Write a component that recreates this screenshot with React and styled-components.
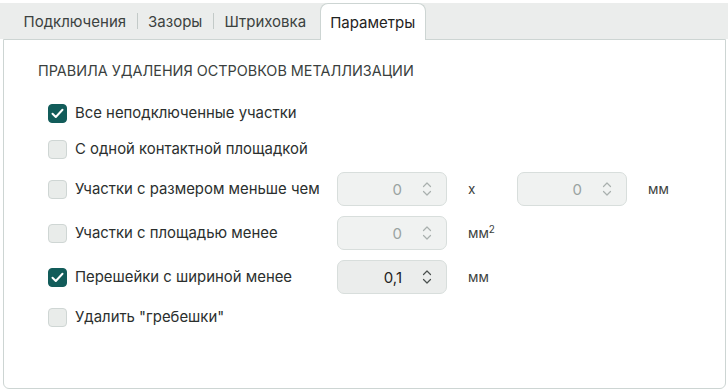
import styled, { createGlobalStyle } from 'styled-components';

const GlobalStyle = createGlobalStyle`
    body {
        margin: 0;
        background: #ffffff;
        font-family: Inter, "Noto Sans", sans-serif;
        color: #2b2f2e;
    }
`;

const tabs = ['Подключения', 'Зазоры', 'Штриховка', 'Параметры'];

function Check({ checked }) {
    return (
        <CheckBox $checked={checked}>
            {checked && (
                <svg width="13" height="11" viewBox="0 0 13 11">
                    <path d="M1.5 5.8 L4.8 9 L11.5 1.8" fill="none" stroke="#ffffff" strokeWidth="2" strokeLinecap="round" strokeLinejoin="round" />
                </svg>
            )}
        </CheckBox>
    );
}

function NumberInput({ value, active }) {
    return (
        <InputBox $active={active}>
            <InputValue $active={active}>{value}</InputValue>
            <svg width="10" height="18" viewBox="0 0 10 18">
                <path d="M1.5 6.5 L5 3 L8.5 6.5 M1.5 11.5 L5 15 L8.5 11.5" fill="none" stroke={active ? '#4a504e' : '#a9b0ae'} strokeWidth="1.2" strokeLinecap="round" strokeLinejoin="round" />
            </svg>
        </InputBox>
    );
}

function App() {
    return (
        <>
            <GlobalStyle />
            <Page>
                <TabBar>
                    {tabs.map((t, i) => (
                        <TabGroup key={t}>
                            {i > 0 && i < 3 && <TabSep />}
                            <Tab $active={t === 'Параметры'}>{t}</Tab>
                        </TabGroup>
                    ))}
                </TabBar>
                <Panel>
                    <Heading>ПРАВИЛА УДАЛЕНИЯ ОСТРОВКОВ МЕТАЛЛИЗАЦИИ</Heading>
                    <Rows>
                        <Row>
                            <Label><Check checked />Все неподключенные участки</Label>
                        </Row>
                        <Row>
                            <Label><Check />С одной контактной площадкой</Label>
                        </Row>
                        <Row>
                            <Label><Check />Участки с размером меньше чем</Label>
                            <NumberInput value="0" />
                            <Unit>x</Unit>
                            <NumberInput value="0" />
                            <Unit>мм</Unit>
                        </Row>
                        <Row>
                            <Label><Check />Участки с площадью менее</Label>
                            <NumberInput value="0" />
                            <Unit>мм<sup>2</sup></Unit>
                        </Row>
                        <Row>
                            <Label><Check checked />Перешейки с шириной менее</Label>
                            <NumberInput value="0,1" active />
                            <Unit>мм</Unit>
                        </Row>
                        <Row>
                            <Label><Check />Удалить "гребешки"</Label>
                        </Row>
                    </Rows>
                </Panel>
            </Page>
        </>
    );
}

export default App;

const Page = styled.div`
    padding-top: 3px;
    width: 728px;
`;

const TabBar = styled.div`
    display: flex;
    align-items: flex-end;
    height: 36px;
    padding-left: 13px;
    background: #ebedec;
`;

const TabGroup = styled.div`
    display: flex;
    align-items: center;
    height: 100%;
`;

const TabSep = styled.div`
    width: 1px;
    height: 16px;
    background: #c3cac8;
`;

const Tab = styled.div`
    display: flex;
    align-items: center;
    box-sizing: border-box;
    height: ${(p) => (p.$active ? '37px' : '36px')};
    margin-left: ${(p) => (p.$active ? '3px' : '0')};
    margin-bottom: ${(p) => (p.$active ? '-1px' : '0')};
    padding: 0 ${(p) => (p.$active ? '9.5px' : '10.5px')};
    font-size: 15px;
    color: ${(p) => (p.$active ? '#1f2322' : '#3c4240')};
    background: ${(p) => (p.$active ? '#ffffff' : 'transparent')};
    border: ${(p) => (p.$active ? '1px solid #cdd5d3' : 'none')};
    border-bottom: none;
    border-radius: 8px 8px 0 0;
    position: relative;
    z-index: 1;
`;

const Panel = styled.div`
    box-sizing: border-box;
    margin: 0 2px 0 3px;
    height: 350px;
    padding: 22px 20px 0 34px;
    border: 1px solid #cdd5d3;
    border-radius: 0 0 6px 6px;
`;

const Heading = styled.div`
    font-size: 14.4px;
    line-height: 18px;
    color: #3a3f3e;
    margin-bottom: 20px;
`;

const Rows = styled.div`
    display: flex;
    flex-direction: column;
    gap: 10px;
    padding-left: 10px;
`;

const Row = styled.div`
    display: flex;
    align-items: center;
    min-height: 26px;
`;

const Label = styled.div`
    display: flex;
    align-items: center;
    flex-shrink: 0;
    gap: 8px;
    width: 289px;
    font-size: 14.9px;
    color: #2b2f2e;
`;

const CheckBox = styled.div`
    display: flex;
    align-items: center;
    justify-content: center;
    flex-shrink: 0;
    box-sizing: border-box;
    width: 19px;
    height: 19px;
    border-radius: 4px;
    background: ${(p) => (p.$checked ? '#125c5a' : '#e9ecea')};
    border: 1px solid ${(p) => (p.$checked ? '#125c5a' : '#cfd6d4')};
`;

const InputBox = styled.div`
    display: flex;
    align-items: center;
    justify-content: flex-end;
    flex-shrink: 0;
    gap: 20px;
    box-sizing: border-box;
    width: 110px;
    height: 34px;
    padding-right: 14px;
    background: ${(p) => (p.$active ? '#ebedec' : '#f0f2f1')};
    border: 1px solid #d8dedc;
    border-radius: 7px;
`;

const InputValue = styled.span`
    font-size: 15px;
    color: ${(p) => (p.$active ? '#1f2322' : '#9aa3a1')};
`;

const Unit = styled.div`
    flex-shrink: 0;
    width: 70px;
    padding-left: 21px;
    box-sizing: border-box;
    font-size: 13.5px;
    color: #3c4240;

    sup {
        font-size: 10px;
        line-height: 0;
    }
`;
